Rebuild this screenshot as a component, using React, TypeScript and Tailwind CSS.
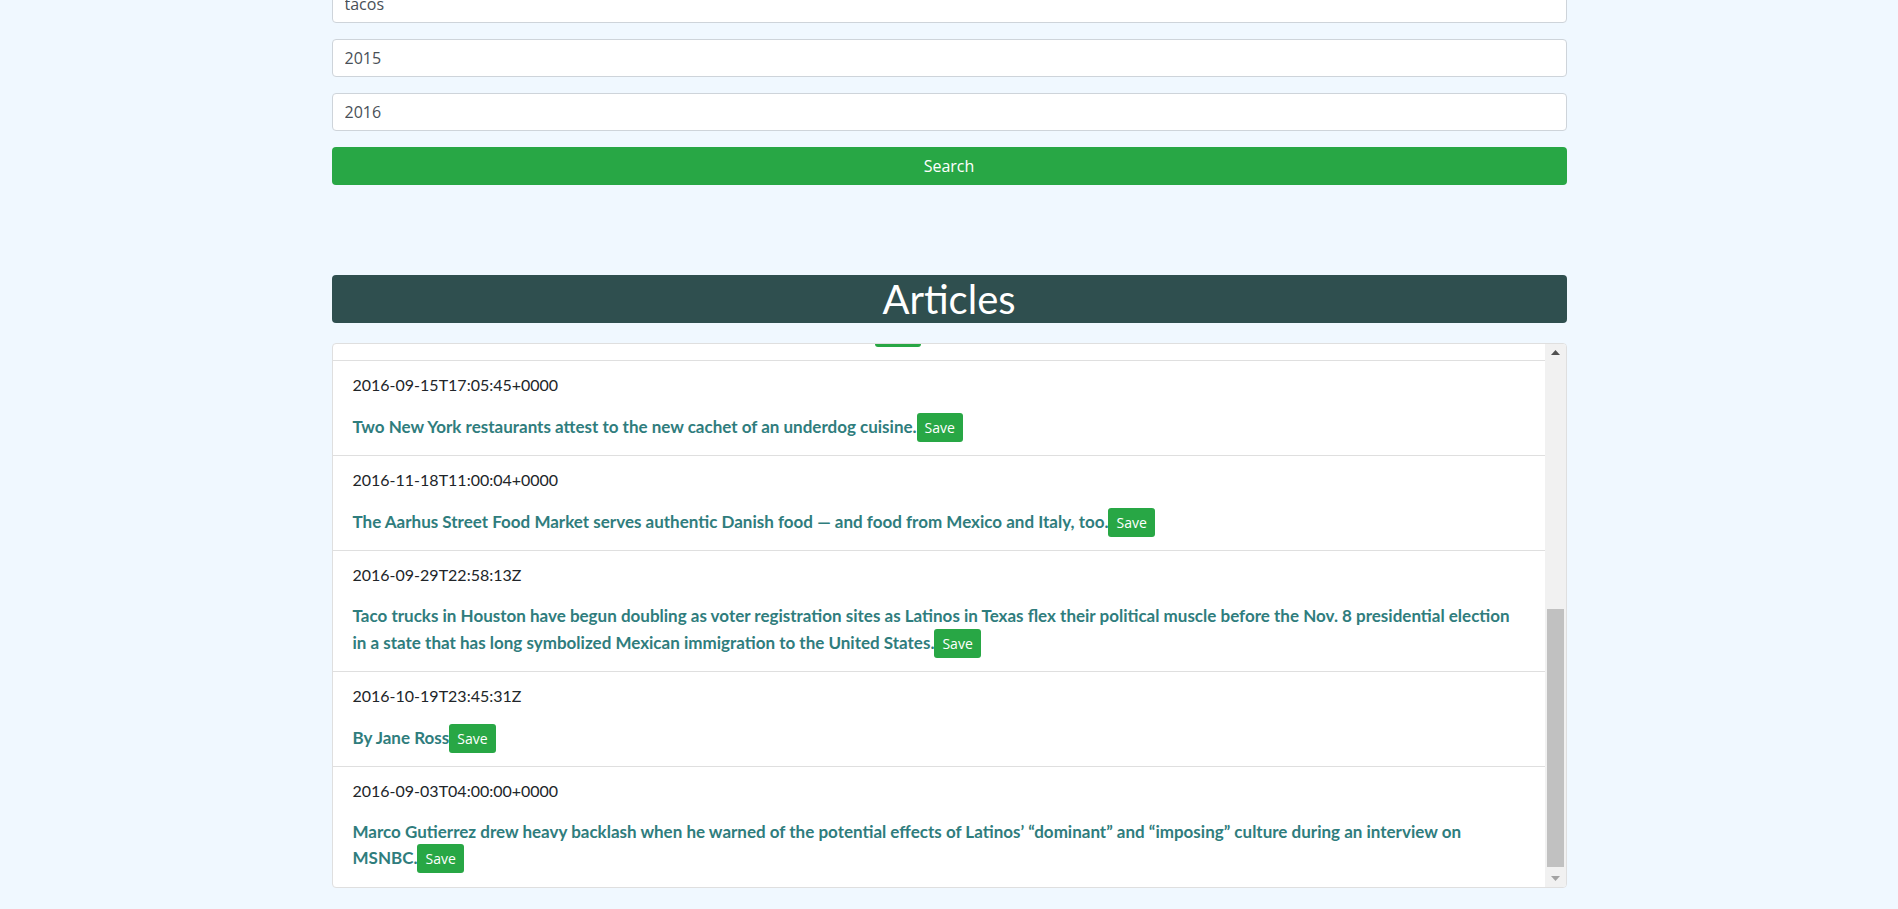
import React from 'react';

interface Article {
  date: string;
  title: string;
}

const articles: Article[] = [
  { date: '2016-09-12T14:20:11+0000', title: 'The taco truck has become an unlikely symbol of this election season.' },
  { date: '2016-09-15T17:05:45+0000', title: 'Two New York restaurants attest to the new cachet of an underdog cuisine.' },
  { date: '2016-11-18T11:00:04+0000', title: 'The Aarhus Street Food Market serves authentic Danish food — and food from Mexico and Italy, too.' },
  {
    date: '2016-09-29T22:58:13Z',
    title:
      'Taco trucks in Houston have begun doubling as voter registration sites as Latinos in Texas flex their political muscle before the Nov. 8 presidential election in a state that has long symbolized Mexican immigration to the United States.',
  },
  { date: '2016-10-19T23:45:31Z', title: 'By Jane Ross' },
  {
    date: '2016-09-03T04:00:00+0000',
    title:
      'Marco Gutierrez drew heavy backlash when he warned of the potential effects of Latinos’ “dominant” and “imposing” culture during an interview on MSNBC.',
  },
];

const uiFont = "font-['Segoe_UI','Open_Sans',sans-serif]";

function ArticleItem({ article, last }: { article: Article; last: boolean }) {
  return (
    <li className={`px-5 pt-3 pb-[13px] ${last ? '' : 'border-b border-[#dfdfdf]'}`}>
      <p className="mb-4 text-[16px] leading-6 text-[#212529]">{article.date}</p>
      <p className="text-[17px] font-bold leading-[25.5px] text-[#2f7d7d]">
        {article.title}
        <button
          type="button"
          className={`inline-block rounded-[3px] bg-[#28a745] px-2 py-1 text-[14px] font-normal leading-[21px] text-white ${uiFont}`}
        >
          Save
        </button>
      </p>
    </li>
  );
}

export default function App() {
  return (
    <div className="min-h-screen bg-[#f0f8ff] font-['Lato',sans-serif]">
      <div className="mx-auto w-[1235px] pb-6">
        {/* search form (page is scrolled, first field is cut off) */}
        <form className={`-mt-[15px] flex flex-col gap-4 ${uiFont}`}>
          {['tacos', '2015', '2016'].map((v) => (
            <input
              key={v}
              readOnly
              value={v}
              className="h-[38px] w-full rounded border border-[#ced4da] bg-white px-3 text-[16px] text-[#495057] outline-none"
            />
          ))}
          <button type="button" className="h-[38px] w-full rounded bg-[#28a745] text-[16px] text-white">
            Search
          </button>
        </form>

        <h1 className="mt-[90px] rounded bg-[#2f4f4f] text-center text-[40px] leading-[48px] text-white">Articles</h1>

        <div className="mt-5 flex h-[545px] overflow-hidden rounded border border-[#dfdfdf] bg-white">
          <div className="flex-1 overflow-hidden">
            <ul className="-mt-[78px]">
              {articles.map((a, i) => (
                <ArticleItem key={a.date} article={a} last={i === articles.length - 1} />
              ))}
            </ul>
          </div>

          {/* scrollbar */}
          <div className="flex w-[21px] flex-col bg-[#f1f1f1]">
            <div className="flex h-[17px] items-center justify-center">
              <svg width="9" height="5" viewBox="0 0 9 5">
                <path d="M0 5 L4.5 0 L9 5 Z" fill="#505050" />
              </svg>
            </div>
            <div className="flex flex-1 flex-col justify-end pb-[3px]">
              <div className="mx-[2px] h-[258px] bg-[#c1c1c1]" />
            </div>
            <div className="flex h-[17px] items-center justify-center">
              <svg width="9" height="5" viewBox="0 0 9 5">
                <path d="M0 0 L9 0 L4.5 5 Z" fill="#a3a3a3" />
              </svg>
            </div>
          </div>
        </div>
      </div>
    </div>
  );
}
